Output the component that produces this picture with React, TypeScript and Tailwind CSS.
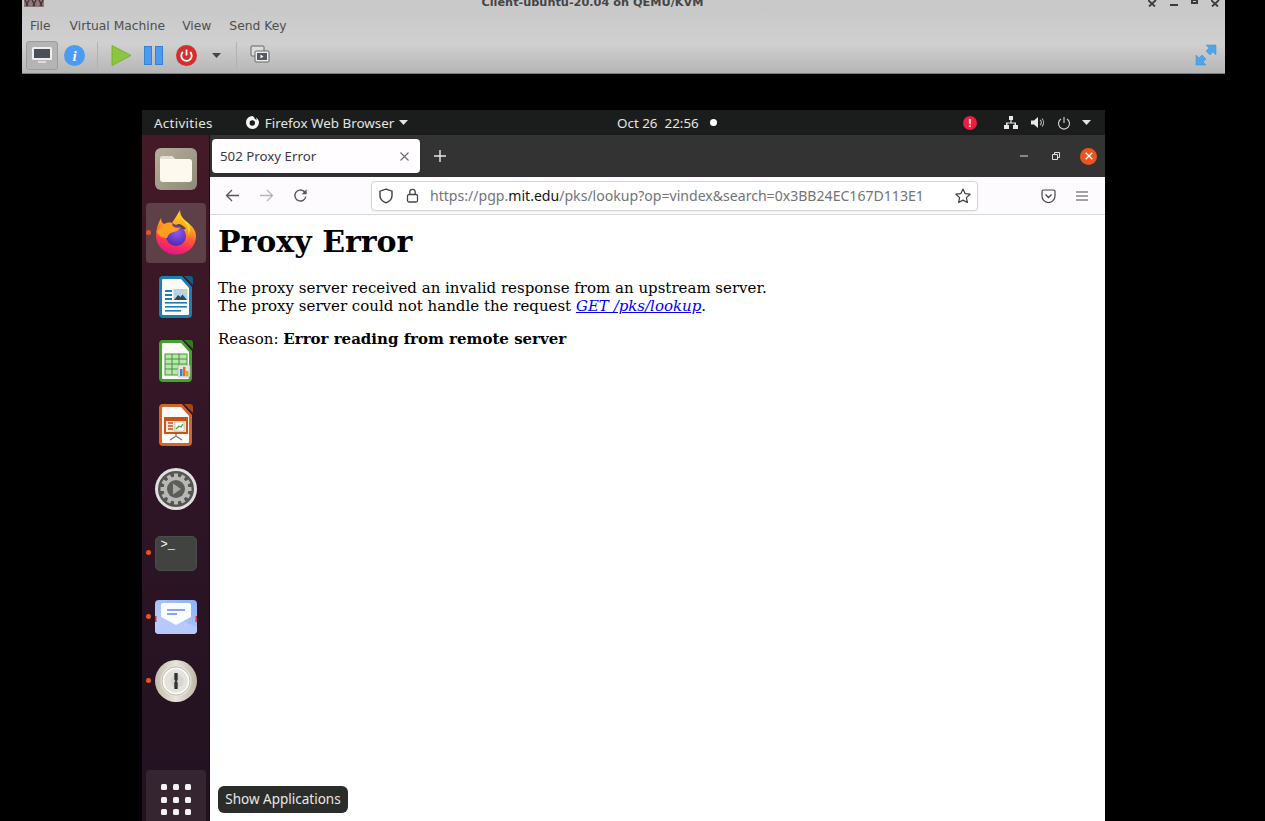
import React from "react";

const Dot = () => <span className="absolute left-[4px] top-1/2 -mt-[3px] w-[5px] h-[5px] rounded-full bg-[#e95420]" />;

function FilesIcon() {
  return (
    <svg width="44" height="44" viewBox="0 0 44 44">
      <defs><linearGradient id="fb" x1="0" y1="0" x2="1" y2="1"><stop offset="0" stopColor="#b5ae9c" /><stop offset="1" stopColor="#8f8a78" /></linearGradient></defs>
      <rect x="1" y="1" width="42" height="42" rx="6" fill="url(#fb)" />
      <path d="M6 12a3 3 0 0 1 3-3h9l3 3h14a3 3 0 0 1 3 3v17a3 3 0 0 1-3 3H9a3 3 0 0 1-3-3z" fill="#fdf9ef" />
      <path d="M6 12a3 3 0 0 1 3-3h9l3 3z" fill="#e3dfd3" />
    </svg>
  );
}

function FirefoxIcon() {
  return (
    <svg className="-mt-[2px]" width="42" height="46" viewBox="0 0 42 46">
      <defs>
        <linearGradient id="ff1" x1="0.65" y1="0" x2="0.4" y2="1"><stop offset="0" stopColor="#ffe226" /><stop offset="0.4" stopColor="#ff9a1f" /><stop offset="0.72" stopColor="#ff3750" /><stop offset="1" stopColor="#e31587" /></linearGradient>
        <radialGradient id="ff2" cx="0.55" cy="0.3" r="0.8"><stop offset="0" stopColor="#8e5cf0" /><stop offset="1" stopColor="#4523a5" /></radialGradient>
      </defs>
      <path d="M25 1C24 6 27 10 32 13C37 17 41 21 41 27C41 38 32 45.500 21 45.500C10 45.500 1 37 1 26C1 20 3 15 6 9C6 12 7 14 9 15C11 14 14 13 17 14C20 9 23 5 25 1z" fill="url(#ff1)" />
      <path d="M17 14C19 15 21 17 23 15C26 15 29 17 31 20L19 22z" fill="#5e4049" />
      <circle cx="21" cy="27" r="10" fill="url(#ff2)" />
      <path d="M2 23C4 19 7 16 11 15.500C15 15 17 16 19 18C21 20 24 19 26 17.500C24 21 21 23 17 23.500C15 24 13 26 12 29C7 29 4 27 2 23z" fill="#ff9d1c" />
      <path d="M25 1C24 6 27 10 30 14C33 18 34 22 33 26C36 22 36 16 32 13C28 10 25 6 25 1z" fill="#ffd426" />
    </svg>
  );
}

function OfficeIcon({ c, dark, kind }: { c: string; dark: string; kind: "w" | "c" | "i" }) {
  return (
    <svg width="34" height="42" viewBox="0 0 34 42">
      <path d="M4 0h19l10 11v27a4 4 0 0 1-4 4H4a4 4 0 0 1-4-4V4a4 4 0 0 1 4-4z" fill={c} />
      <path d="M4 3h18l8 9v26a1 1 0 0 1-1 1H4a1 1 0 0 1-1-1V4a1 1 0 0 1 1-1z" fill="#fdfbf8" />
      <path d="M25 0h6a3 3 0 0 1 3 3v6z" fill={dark} />
      {kind === "w" && (
        <g>
          <rect x="6" y="14" width="7" height="2" fill="#1b7fb5" /><rect x="6" y="18" width="7" height="2" fill="#1b7fb5" /><rect x="6" y="22" width="7" height="2" fill="#1b7fb5" />
          <rect x="6" y="26" width="22" height="1.600" fill="#1b7fb5" /><rect x="6" y="30" width="22" height="1.600" fill="#1b7fb5" /><rect x="6" y="34" width="16" height="1.600" fill="#1b7fb5" />
          <rect x="14.500" y="13" width="14" height="11" fill="#b5d3e6" /><path d="M15 24l4-5 2.500 2 2-2.500 4.500 5.500z" fill="#33485a" /><circle cx="26" cy="15.500" r="1.400" fill="#f3d36b" />
        </g>
      )}
      {kind === "c" && (
        <g>
          <rect x="6" y="14" width="22" height="21" fill="#bfe3b4" stroke="#3f9a2f" />
          <path d="M6 19h22M6 24h22M6 29h22M13 14v21M20 14v21" stroke="#3f9a2f" strokeWidth="1" />
          <rect x="19" y="25" width="12" height="12" rx="1" fill="#e7e4e0" stroke="#a9a9a9" strokeWidth=".6" /><rect x="21" y="29" width="2.500" height="7" fill="#2e86c8" /><rect x="24" y="27" width="2.500" height="9" fill="#e06a2b" /><rect x="27" y="31" width="2.500" height="5" fill="#d4a62a" />
        </g>
      )}
      {kind === "i" && (
        <g>
          <rect x="5" y="13" width="24" height="17" fill="#c8541b" /><rect x="7" y="17" width="20" height="11" fill="#f6e6d8" />
          <path d="M9 19h5M9 22h5M9 25h5" stroke="#c8541b" strokeWidth="1.600" /><rect x="16" y="18" width="9" height="9" fill="#fff" stroke="#888" strokeWidth=".5" />
          <path d="M17 25l3-3 2 1 2-3" stroke="#3fa535" strokeWidth="1.200" fill="none" />
          <path d="M17 30v3M17 32l-6 4M17 32l6 4" stroke="#777" strokeWidth="1.200" fill="none" />
        </g>
      )}
    </svg>
  );
}

function SettingsIcon() {
  const teeth = Array.from({ length: 12 }, (_, i) => i * 30);
  return (
    <svg width="44" height="44" viewBox="0 0 44 44">
      <circle cx="22" cy="22" r="21" fill="#e0e0dc" />
      <circle cx="22" cy="22" r="18" fill="#555653" />
      <circle cx="22" cy="22" r="12.500" fill="#b8b8b4" />
      {teeth.map((a) => <rect key={a} x="20" y="6.500" width="4" height="5" fill="#b8b8b4" transform={`rotate(${a} 22 22)`} />)}
      <circle cx="22" cy="22" r="9" fill="#5c5d5a" />
      <path d="M19 16.500l8 5.500-8 5.500z" fill="#a9a9a5" />
    </svg>
  );
}

function TerminalIcon() {
  return (
    <div className="w-[42px] h-[35px] rounded-[5px] bg-[#414341] border border-[#4b4d49] overflow-hidden">
      <span className="block text-white text-[12px] leading-[12px] pl-[5px] pt-[2px] font-['Liberation_Mono',monospace]">&gt;_</span>
    </div>
  );
}

function MailIcon() {
  return (
    <svg width="44" height="36" viewBox="0 0 44 36">
      <defs><linearGradient id="ml" x1="0" y1="1" x2="1" y2="0"><stop offset="0" stopColor="#c3d4fb" /><stop offset="1" stopColor="#8db0f6" /></linearGradient></defs>
      <rect x="1" y="1" width="42" height="34" rx="4" fill="url(#ml)" />
      <path d="M1 28l22-8 20 8v3a4 4 0 0 1-4 4H5a4 4 0 0 1-4-4z" fill="#b6c9fb" />
      <path d="M7 6a2 2 0 0 1 2-2h26a2 2 0 0 1 2 2v12l-15 8-15-8z" fill="#fbfcff" />
      <path d="M13 11h18M13 15h10" stroke="#87a6ea" strokeWidth="1.800" />
      <path d="M1 17h1.500v6H1zM41.500 17H43v6h-1.500z" fill="#e0304a" />
    </svg>
  );
}

function KeyIcon() {
  return (
    <svg width="44" height="44" viewBox="0 0 44 44">
      <defs><linearGradient id="kr" x1="0" y1="0" x2="1" y2="0"><stop offset="0" stopColor="#c3bdaa" /><stop offset="0.5" stopColor="#e8e5da" /><stop offset="1" stopColor="#bdb7a4" /></linearGradient></defs>
      <circle cx="22" cy="22" r="21" fill="url(#kr)" />
      <circle cx="22" cy="22" r="15.500" fill="#e4e2da" />
      <circle cx="22" cy="22" r="14" fill="none" stroke="#b9b6aa" strokeWidth=".8" />
      <circle cx="22" cy="22" r="12.500" fill="none" stroke="#ffffff" strokeWidth="1.400" />
      <circle cx="23" cy="22" r="6.500" fill="#d5d5d2" />
      <path d="M20.300 14h3.400v7l-1 1.500 1 1v6.500h-3.400v-6.500l1-1.500-1-1.500z" fill="#333333" />
    </svg>
  );
}

const Row = ({ dot, children, active }: { dot?: boolean; active?: boolean; children: React.ReactNode }) => (
  <div className="relative h-[64px] w-full flex items-center justify-center">
    {active && <div className="absolute left-[4px] top-[2px] w-[60px] h-[60px] rounded-[4px] bg-[#5e4049]" />}
    {dot && <Dot />}
    <div className="relative flex items-center justify-center">{children}</div>
  </div>
);

function Dock() {
  return (
    <div className="relative w-[68px] shrink-0 overflow-hidden flex flex-col pt-[2px] bg-gradient-to-b from-[#451a27] via-[#2f1526] to-[#211220] border-r border-[#1a0f18]">
      <Row><FilesIcon /></Row>
      <Row dot active><FirefoxIcon /></Row>
      <Row><OfficeIcon c="#1a7fb2" dark="#125e85" kind="w" /></Row>
      <Row><OfficeIcon c="#43a32f" dark="#2c7f1e" kind="c" /></Row>
      <Row><OfficeIcon c="#d2652a" dark="#a84715" kind="i" /></Row>
      <Row><SettingsIcon /></Row>
      <Row dot><TerminalIcon /></Row>
      <Row dot><MailIcon /></Row>
      <Row dot><KeyIcon /></Row>
      <div className="mt-auto -mb-[9px] ml-[4px] w-[60px] h-[60px] rounded-[4px] bg-[#352530] shrink-0 grid grid-cols-3 gap-[6px] px-[15px] py-[14px]">
        {Array.from({ length: 9 }, (_, i) => <span key={i} className="w-[6px] h-[6px] rounded-[1.5px] bg-[#f3f1f2]" />)}
      </div>
    </div>
  );
}

function TopBar() {
  return (
    <div className="h-[25px] shrink-0 bg-[#1a1d1b] flex items-center text-[#e4e4e2] text-[13.4px] font-['Noto_Sans',sans-serif] relative">
      <span className="ml-[12px] mt-[1px] tracking-[0.3px]">Activities</span>
      <svg className="ml-[32px]" width="15" height="15" viewBox="0 0 15 15"><path d="M7.500 1A6.500 6.500 0 1 0 14 7.800C14 5.500 12.800 3.600 11 2.800L11.800 5.200 9.800 3.700C9.300 2.500 8.500 1.500 7.500 1z" fill="#f4f4f2" /><circle cx="7.300" cy="8" r="2.700" fill="#1a1d1b" /></svg>
      <span className="ml-[5px] mt-[1px]">Firefox Web Browser</span>
      <svg className="ml-[5px]" width="9" height="5" viewBox="0 0 9 5"><path d="M0 0h9L4.500 5z" fill="#e4e4e2" /></svg>
      <div className="absolute left-[475px] top-0 h-full flex items-center">
        <span className="mt-[1px]">Oct 26</span><span className="ml-[7px] mt-[1px]">22:56</span>
        <span className="ml-[11px] w-[7px] h-[7px] rounded-full bg-white" />
      </div>
      <div className="ml-auto flex items-center mr-[14px]">
        <span className="w-[14px] h-[14px] rounded-full bg-[#ee1b42] text-white text-[10px] leading-[14px] text-center font-bold">!</span>
        <svg className="ml-[27px]" width="14" height="13" viewBox="0 0 14 13"><path d="M5 0h4v4H7.600v2.500H12V9h2v4H9V9h1.500V7.500h-7V9H5v4H0V9h2V6.500h4.400V4H5z" fill="#e8e8e6" /></svg>
        <svg className="ml-[13px]" width="14" height="13" viewBox="0 0 14 13"><path d="M0 4.500h3L7 1v11L3 8.500H0z" fill="#e8e8e6" /><path d="M9 4a3 3 0 0 1 0 5M11 2.500a6 6 0 0 1 0 8" fill="none" stroke="#bdbdbb" strokeWidth="1.100" /></svg>
        <svg className="ml-[12px]" width="14" height="14" viewBox="0 0 14 14"><path d="M4 3a5.500 5.500 0 1 0 6 0M7 1v6" fill="none" stroke="#d8d8d6" strokeWidth="1.100" /></svg>
        <svg className="ml-[11px]" width="9" height="5" viewBox="0 0 9 5"><path d="M0 0h9L4.500 5z" fill="#e4e4e2" /></svg>
      </div>
    </div>
  );
}

function TabBar() {
  return (
    <div className="h-[42px] shrink-0 bg-[#333333] flex items-center text-white font-['Noto_Sans',sans-serif]">
      <div className="ml-[2px] w-[208px] h-[34px] rounded-[4px] bg-[#fffdff] text-[#3a3a3d] text-[13.3px] flex items-center pl-[8px] pr-[11px] shadow-sm">
        <span className="mt-[2px]">502 Proxy Error</span>
        <svg className="ml-auto" width="9" height="9" viewBox="0 0 9 9"><path d="M.5.5l8 8M8.500.5l-8 8" stroke="#6a6a6e" strokeWidth="1.100" /></svg>
      </div>
      <svg className="ml-[14px]" width="12" height="12" viewBox="0 0 12 12"><path d="M6 0v12M0 6h12" stroke="#e8e8e8" strokeWidth="1.400" /></svg>
      <svg className="ml-auto" width="8" height="2" viewBox="0 0 8 2"><path d="M0 1h8" stroke="#ddd" strokeWidth="1" /></svg>
      <svg className="ml-[24px]" width="8" height="8" viewBox="0 0 8 8"><path d="M2.500 2.500V.5h5v5h-2M.5 2.500h5v5h-5z" fill="none" stroke="#e0e0e0" strokeWidth="1" /></svg>
      <span className="ml-[20px] mr-[8px] w-[17px] h-[17px] rounded-full bg-[#e95420] flex items-center justify-center">
        <svg width="8" height="8" viewBox="0 0 8 8"><path d="M.7.7l6.600 6.600M7.300.7L.7 7.300" stroke="#fff" strokeWidth="1.300" /></svg>
      </span>
    </div>
  );
}

function NavBar() {
  return (
    <div className="h-[38px] shrink-0 bg-[#fdfbfe] border-b border-[#d8d8dc] flex items-center font-['Noto_Sans',sans-serif]">
      <svg className="ml-[15px]" width="15" height="13" viewBox="0 0 15 13"><path d="M14 6.500H1.500M7 1L1.500 6.500 7 12" fill="none" stroke="#55555a" strokeWidth="1.300" /></svg>
      <svg className="ml-[19px]" width="15" height="13" viewBox="0 0 15 13"><path d="M1 6.500h12.500M8 1l5.500 5.500L8 12" fill="none" stroke="#b4b4b8" strokeWidth="1.300" /></svg>
      <svg className="ml-[19px]" width="15" height="15" viewBox="0 0 15 15"><path d="M12.800 8.500A5.500 5.500 0 1 1 11 3.400L13 5.300" fill="none" stroke="#55555a" strokeWidth="1.400" /><path d="M13.600 1.200v5h-5z" fill="#55555a" /></svg>
      <div className="ml-[63px] w-[607px] h-[30px] rounded-[4px] bg-white border border-[#d3d3d8] flex items-center shadow-[0_1px_2px_rgba(0,0,0,0.05)]">
        <svg className="ml-[6px]" width="16" height="16" viewBox="0 0 16 16"><path d="M8 1.200l6 2v4.600c0 3.400-2.600 5.700-6 7-3.400-1.300-6-3.600-6-7V3.200z" fill="none" stroke="#3e3e42" strokeWidth="1.400" /></svg>
        <svg className="ml-[12px]" width="13" height="15" viewBox="0 0 13 15"><rect x="1.500" y="6.500" width="10" height="7.500" rx="1.500" fill="none" stroke="#44444a" strokeWidth="1.300" /><path d="M3.800 6.500V4a2.700 2.700 0 0 1 5.400 0v2.500" fill="none" stroke="#44444a" strokeWidth="1.300" /></svg>
        <span className="ml-[11px] mt-[1px] text-[14.08px] text-[#737378] whitespace-nowrap">https://pgp.<span className="text-[#15141a]">mit.edu</span>/pks/lookup?op=vindex&amp;search=0x3BB24EC167D113E1</span>
        <svg className="ml-auto mr-[6px]" width="16" height="16" viewBox="0 0 16 16"><path d="M8 1l2.100 4.600 5 .6-3.700 3.400 1 4.900L8 12.100l-4.400 2.400 1-4.900L.9 6.200l5-.6z" fill="none" stroke="#3e3e42" strokeWidth="1.200" strokeLinejoin="round" /></svg>
      </div>
      <svg className="ml-[63px]" width="15" height="14" viewBox="0 0 15 14"><path d="M1 2.500A1.500 1.500 0 0 1 2.500 1h10A1.500 1.500 0 0 1 14 2.500V7a6.500 6.500 0 0 1-13 0z" fill="none" stroke="#44444a" strokeWidth="1.200" /><path d="M4.500 5.500l3 3 3-3" fill="none" stroke="#44444a" strokeWidth="1.300" /></svg>
      <svg className="ml-[20px]" width="12" height="10" viewBox="0 0 12 10"><path d="M0 1h12M0 5h12M0 9h12" stroke="#4a4a4f" strokeWidth="1.200" /></svg>
    </div>
  );
}

function Page() {
  return (
    <div className="flex-1 bg-white text-black pl-[8px] pt-[8px] font-['DejaVu_Serif',serif] text-[15px] leading-[18px]">
      <h1 className="text-[30px] leading-[38px] font-bold">Proxy Error</h1>
      <p className="mt-[18px]">
        The proxy server received an invalid response from an upstream server.<br />
        The proxy server could not handle the request <a className="italic underline text-[#0000ee]">GET /pks/lookup</a>.
      </p>
      <p className="mt-[15px]">Reason: <strong className="font-bold">Error reading from remote server</strong></p>
    </div>
  );
}

const VX = () => (
  <svg width="9" height="7" viewBox="0 0 9 7"><path d="M0 0l7 6.500M8 0L1 6.500" stroke="#3b3b3b" strokeWidth="1.800" /></svg>
);

function Vmm() {
  return (
    <div className="ml-[22px] w-[1203px] h-[74px] shrink-0 flex flex-col font-['DejaVu_Sans',sans-serif] border-b border-[#7d7d7d]">
      <div className="h-[14px] bg-[#c9c9c9] overflow-hidden relative flex justify-center pr-[62px] shrink-0">
        <span className="-mt-[5px] h-[16px] text-[11.3px] leading-[16px] font-bold text-[#454545]">Client-ubuntu-20.04 on QEMU/KVM</span>
        <svg className="absolute left-[2px] top-0" width="20" height="7" viewBox="0 0 20 7"><rect width="20" height="7" fill="#8a7a7c" /><path d="M1 0l3 6M5 0L2 6M8 0l3 6M12 0L9 6M15 0l3 6M19 0l-3 6" stroke="#4a3034" strokeWidth="1.300" /></svg>
        <div className="absolute right-[5px] top-0 flex items-start gap-[13px]">
          <VX />
          <span className="mt-[4px] w-[8px] h-[2px] bg-[#3b3b3b]" />
          <span className="-mt-[1px] w-[7px] h-[5px] border-2 border-[#3b3b3b]" />
          <VX />
        </div>
      </div>
      <div className="flex-1 bg-gradient-to-b from-[#cacaca] via-[#d0d0d0] to-[#b6b6b6] flex flex-col">
        <div className="h-[25px] flex items-center text-[12.3px] text-[#4f4f4f] pl-[8px] gap-[17px]">
          <span className="mr-[2px]">File</span><span>Virtual Machine</span><span>View</span><span className="ml-[1px]">Send Key</span>
        </div>
        <div className="h-[34px] pb-[2px] flex items-center">
          <div className="ml-[4px] w-[32px] h-[29px] rounded-[3px] bg-[#b4b4b4] border border-[#9c9c9c] flex items-center justify-center">
            <svg width="20" height="18" viewBox="0 0 20 18"><rect x="0" y="1" width="20" height="13" rx="1.500" fill="#eeeeee" /><rect x="2" y="3" width="16" height="9" fill="#4a4f55" /><rect x="6" y="15" width="8" height="2" fill="#dddddd" /></svg>
          </div>
          <svg className="ml-[6px]" width="21" height="21" viewBox="0 0 21 21"><circle cx="10.500" cy="10.500" r="10.500" fill="#4a9cf0" /><text x="10.500" y="16" textAnchor="middle" fontFamily="Liberation Serif, serif" fontStyle="italic" fontWeight="700" fontSize="15" fill="#ffffff">i</text></svg>
          <span className="ml-[12px] w-px h-[27px] bg-[#b2b2b2]" />
          <svg className="ml-[13px]" width="20" height="21" viewBox="0 0 20 21"><path d="M1 .5l19 10-19 10z" fill="#8cc63f" stroke="#6fa82e" strokeWidth=".8" /></svg>
          <div className="ml-[13px] flex gap-[3px]">
            <span className="w-[8px] h-[19px] bg-[#4b9bf2] border border-[#3a80d0]" /><span className="w-[8px] h-[19px] bg-[#4b9bf2] border border-[#3a80d0]" />
          </div>
          <svg className="ml-[13px]" width="21" height="21" viewBox="0 0 21 21"><circle cx="10.500" cy="10.500" r="10.500" fill="#d32f2f" /><path d="M6.800 7a5.200 5.200 0 1 0 7.400 0M10.500 4.500v6" fill="none" stroke="#ffffff" strokeWidth="1.800" /></svg>
          <svg className="ml-[15px]" width="9" height="5" viewBox="0 0 9 5"><path d="M0 0h9L4.500 5z" fill="#444444" /></svg>
          <span className="ml-[15px] w-px h-[27px] bg-[#b2b2b2]" />
          <svg className="ml-[13px]" width="20" height="20" viewBox="0 0 20 20"><rect x="1" y="1" width="13" height="10" rx="1" fill="#dddddd" stroke="#666666" /><rect x="5" y="6" width="14" height="11" rx="1" fill="#eeeeee" stroke="#666666" /><rect x="7" y="8" width="10" height="7" fill="#555a60" /><path d="M10.500 9.500l3 2-3 2z" fill="#ffffff" /></svg>
          <svg className="ml-auto mr-[8px]" width="22" height="22" viewBox="0 0 22 22"><path d="M11 1h10v10l-3-3-3 3-4-4 3-3zM11 21H1V11l3 3 3-3 4 4-3 3z" fill="#4da6ea" stroke="#3c8fd4" strokeWidth=".5" /></svg>
        </div>
      </div>
    </div>
  );
}

export default function App() {
  return (
    <div className="w-[1265px] h-[821px] bg-black overflow-hidden flex flex-col">
      <Vmm />
      <div className="mt-[36px] ml-[142px] w-[963px] flex-1 min-h-0 flex flex-col relative">
        <TopBar />
        <div className="flex-1 min-h-0 flex">
          <Dock />
          <div className="flex-1 min-w-0 flex flex-col">
            <TabBar />
            <NavBar />
            <Page />
          </div>
        </div>
        <div className="absolute left-[76px] top-[676px] w-[130px] h-[27px] rounded-[6px] bg-[#2b2d2b] text-[#e8e8e6] text-[13.5px] font-['Noto_Sans',sans-serif] flex items-center justify-center whitespace-nowrap">Show Applications</div>
      </div>
    </div>
  );
}
